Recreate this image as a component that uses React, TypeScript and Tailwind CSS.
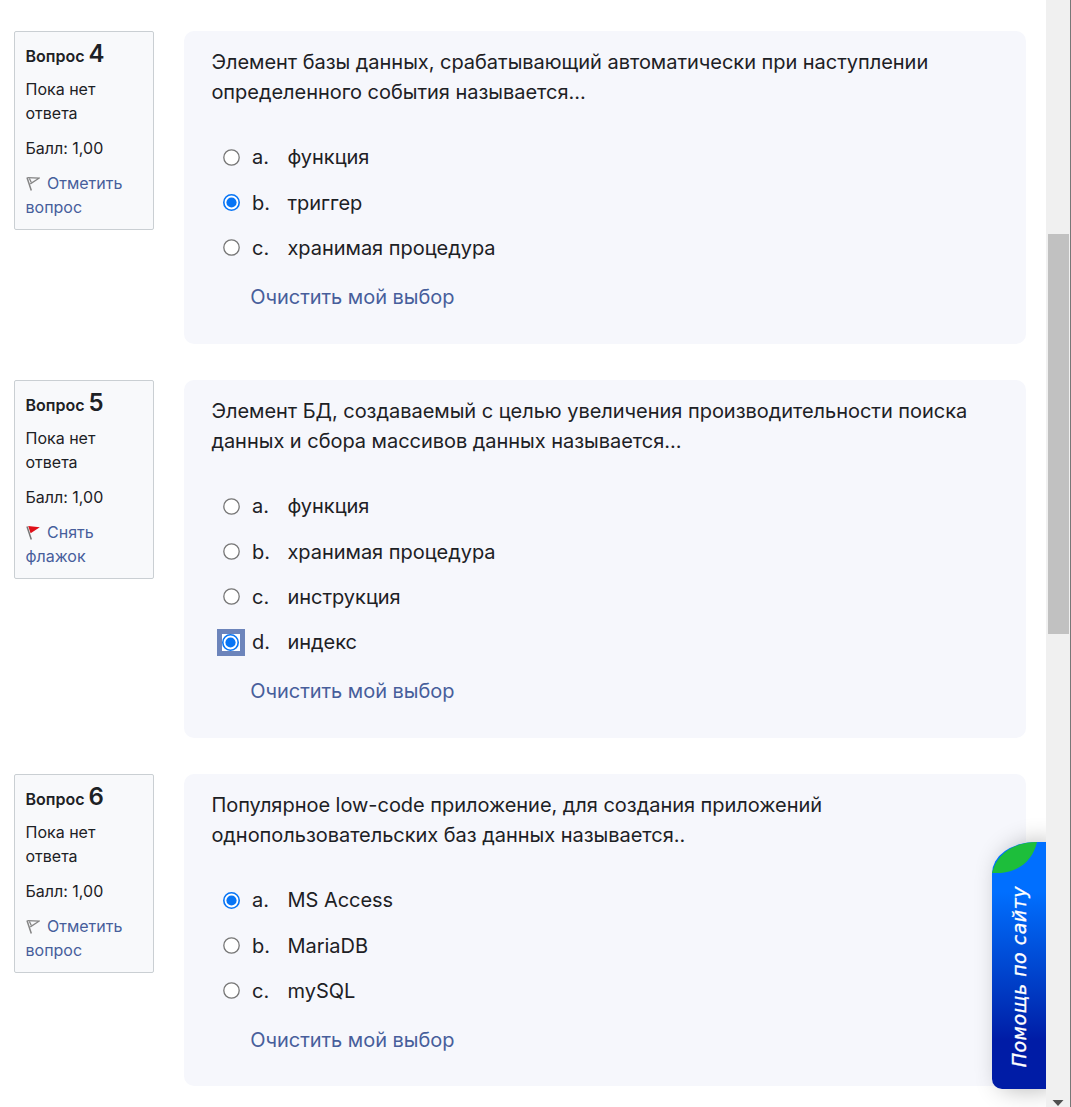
import { useState } from "react";

type Question = {
  number: number;
  flagged: boolean;
  flagText: [string, string];
  text: [string, string];
  options: string[];
  selected: number;
  focused?: boolean;
  cardClass: string;
};

const QUESTIONS: Question[] = [
  {
    number: 4,
    flagged: false,
    flagText: ["Отметить", "вопрос"],
    text: [
      "Элемент базы данных, срабатывающий автоматически при наступлении",
      "определенного события называется...",
    ],
    options: ["функция", "триггер", "хранимая процедура"],
    selected: 1,
    cardClass: "h-[313px]",
  },
  {
    number: 5,
    flagged: true,
    flagText: ["Снять", "флажок"],
    text: [
      "Элемент БД, создаваемый с целью увеличения производительности поиска",
      "данных и сбора массивов данных называется...",
    ],
    options: ["функция", "хранимая процедура", "инструкция", "индекс"],
    selected: 3,
    focused: true,
    cardClass: "h-[358px]",
  },
  {
    number: 6,
    flagged: false,
    flagText: ["Отметить", "вопрос"],
    text: [
      "Популярное low-code приложение, для создания приложений",
      "однопользовательских баз данных называется..",
    ],
    options: ["MS Access", "MariaDB", "mySQL"],
    selected: 0,
    cardClass: "h-[312px]",
  },
];

function Flag({ on }: { on: boolean }) {
  return (
    <svg className="mr-[7.5px] inline-block h-[16px] w-[14px] align-[-3px]" viewBox="0 0 14 16" fill="none">
      <path d="M1 1.5 L5.3 14.5" stroke={on ? "#777" : "#858585"} strokeWidth="1.5" />
      {on ? (
        <path d="M2.2 1 L13.8 2.3 L4.6 8.2 Z" fill="#df1018" />
      ) : (
        <path d="M1.5 1.7 L13 2.2 L4.3 7.9 M3.4 2.5 L5.2 6.3" stroke="#858585" strokeWidth="1.3" />
      )}
    </svg>
  );
}

function Radio({ checked, focused, onClick }: { checked: boolean; focused: boolean; onClick: () => void }) {
  return (
    <button
      type="button"
      role="radio"
      aria-checked={checked}
      onClick={onClick}
      className={
        focused
          ? "-ml-[6px] mr-[7px] flex h-[27px] w-[28px] items-center justify-center border-[5px] border-[#6c84bb] bg-white"
          : "mr-[12px] flex h-[17px] w-[17px] items-center justify-center"
      }
    >
      <svg className="h-[17px] w-[17px] shrink-0" viewBox="0 0 17 17">
        <circle cx="8.5" cy="8.5" r="7.7" fill="#fff" stroke={checked ? "#0875f5" : "#767676"} strokeWidth={checked ? 1.6 : 1.3} />
        {checked && <circle cx="8.5" cy="8.5" r="5.1" fill="#0875f5" />}
      </svg>
    </button>
  );
}

function QuestionBlock({ q }: { q: Question }) {
  const [selected, setSelected] = useState(q.selected);
  return (
    <section className="flex items-start">
      <aside className="h-[199px] w-[140px] shrink-0 rounded-[2px] border border-[#cacfd3] bg-[#f8f9fb] pl-[10.5px] pt-[5px] text-[16px] leading-[24px]">
        <h3 className="flex h-[34px] items-baseline text-[16px] font-semibold leading-[34px]">
          Вопрос<span className="ml-[4px] text-[24px]">{q.number}</span>
        </h3>
        <p className="mt-[6px]">
          Пока нет
          <br />
          ответа
        </p>
        <p className="mt-[11px]">Балл: 1,00</p>
        <p className="mt-[11px] text-[#475e9b]">
          <Flag on={q.flagged} />
          {q.flagText[0]}
          <br />
          {q.flagText[1]}
        </p>
      </aside>
      <div className={`ml-[30px] w-[842px] rounded-[10px] bg-[#f6f7fc] pl-[27.4px] pt-[16px] text-[20px] leading-[30px] tracking-[-0.035px] ${q.cardClass}`}>
        <p className="whitespace-nowrap">
          {q.text[0]}
          <br />
          {q.text[1]}
        </p>
        <div className="mt-[27.6px] pl-[11.6px]" role="radiogroup">
          {q.options.map((option, i) => (
            <div key={option} className="flex h-[45.3px] items-center">
              <Radio checked={selected === i} focused={!!q.focused && selected === i} onClick={() => setSelected(i)} />
              <span className="w-[35.5px]">{"abcd"[i]}.</span>
              <span>{option}</span>
            </div>
          ))}
        </div>
        <button type="button" onClick={() => setSelected(-1)} className="ml-[38.8px] mt-[11.2px] block text-[#475e9b]">
          Очистить мой выбор
        </button>
      </div>
    </section>
  );
}

export default function App() {
  return (
    <div className="relative flex h-[1107px] w-[1071px] overflow-hidden bg-white font-['Inter',sans-serif] text-[#1d2125]">
      <main className="flex w-[1046px] flex-col gap-[36px] pl-[14px] pt-[31px]">
        {QUESTIONS.map((q) => (
          <QuestionBlock key={q.number} q={q} />
        ))}
      </main>
      <div className="flex w-[25px] shrink-0 border-r border-[#777] bg-[#f0f0f0]">
        <div className="flex w-[24px] flex-col items-center">
          <div className="mt-[234px] h-[400px] w-[21px] bg-[#c1c1c1]" />
          <svg className="mb-[1px] mt-auto h-[6px] w-[12px]" viewBox="0 0 12 6">
            <path d="M0.5 0H11.5L6 6Z" fill="#505050" />
          </svg>
        </div>
      </div>
      <div className="absolute left-[966px] top-[812px] h-[295px] w-[80px] overflow-hidden">
        <button
          type="button"
          className="absolute left-[26px] top-[30px] flex h-[247px] w-[54px] items-center justify-center rounded-bl-[10px] rounded-tl-[44px_31px] bg-linear-to-b from-[#006fff] from-20% to-[#001ca6] to-80% shadow-[8px_0_24px_rgba(0,0,0,0.3)]"
        >
          <svg className="absolute left-0 top-0 h-[31px] w-[45px]" viewBox="0 0 45 31">
            <path d="M0 31C4 14 20 0 45 0C41 18 26 33 0 31Z" fill="#1dbe3b" />
          </svg>
          <span className="mt-[23px] rotate-180 whitespace-nowrap font-['DejaVu_Sans',sans-serif] text-[19px] italic leading-[24px] tracking-[0.5px] text-white [-webkit-text-stroke:0.3px_white] [writing-mode:vertical-rl]">
            Помощь по сайту
          </span>
        </button>
      </div>
    </div>
  );
}
